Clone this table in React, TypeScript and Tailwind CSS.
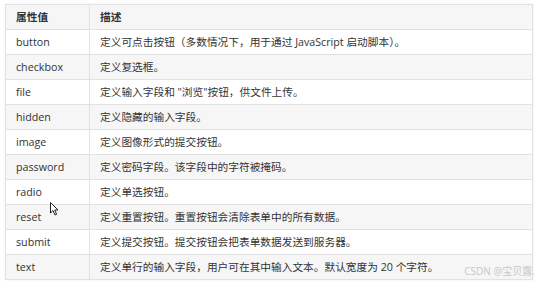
import React from 'react';

const rows: [string, string][] = [
    ['button', '定义可点击按钮（多数情况下，用于通过 JavaScript 启动脚本）。'],
    ['checkbox', '定义复选框。'],
    ['file', '定义输入字段和 "浏览"按钮，供文件上传。'],
    ['hidden', '定义隐藏的输入字段。'],
    ['image', '定义图像形式的提交按钮。'],
    ['password', '定义密码字段。该字段中的字符被掩码。'],
    ['radio', '定义单选按钮。'],
    ['reset', '定义重置按钮。重置按钮会清除表单中的所有数据。'],
    ['submit', '定义提交按钮。提交按钮会把表单数据发送到服务器。'],
    ['text', '定义单行的输入字段，用户可在其中输入文本。默认宽度为 20 个字符。'],
];

const App: React.FC = () => {
    return (
        <div
            className="relative w-[540px] h-[288px] bg-white overflow-hidden pl-[5px] pt-[4px]"
            style={{ fontFamily: '"Open Sans", "Noto Sans CJK SC", sans-serif' }}
        >
            <table className="w-[528px] border-collapse text-[10.7px] text-[#333] leading-none shadow-[0_0_2px_rgba(0,0,0,0.08)]">
                <thead>
                    <tr className="h-[25px] bg-[#f6f6f6]">
                        <th className="w-[84px] border border-[#e2e2e2] px-[10px] text-left font-bold">属性值</th>
                        <th className="border border-[#e2e2e2] px-[10px] text-left font-bold">描述</th>
                    </tr>
                </thead>
                <tbody>
                    {rows.map(([name, desc], i) => (
                        <tr key={name} className={i % 2 === 0 ? 'h-[25px] bg-white' : 'h-[25px] bg-[#f6f6f6]'}>
                            <td className="border border-[#e2e2e2] px-[10px]">{name}</td>
                            <td className="border border-[#e2e2e2] px-[10px]">{desc}</td>
                        </tr>
                    ))}
                </tbody>
            </table>

            {/* mouse cursor */}
            <svg className="absolute left-[50px] top-[202px]" width="10" height="14" viewBox="0 0 10 14">
                <path d="M0.5 0.5 L0.5 11 L3 8.6 L5 13 L6.6 12.3 L4.7 8 L8 8 Z" fill="white" stroke="#222" strokeWidth="1" />
            </svg>

            {/* watermark */}
            <div className="absolute right-[5px] top-[266px] text-[10px] text-[#c8c8c8] leading-none">
                CSDN @宝贝露.
            </div>
        </div>
    );
};

export default App;
